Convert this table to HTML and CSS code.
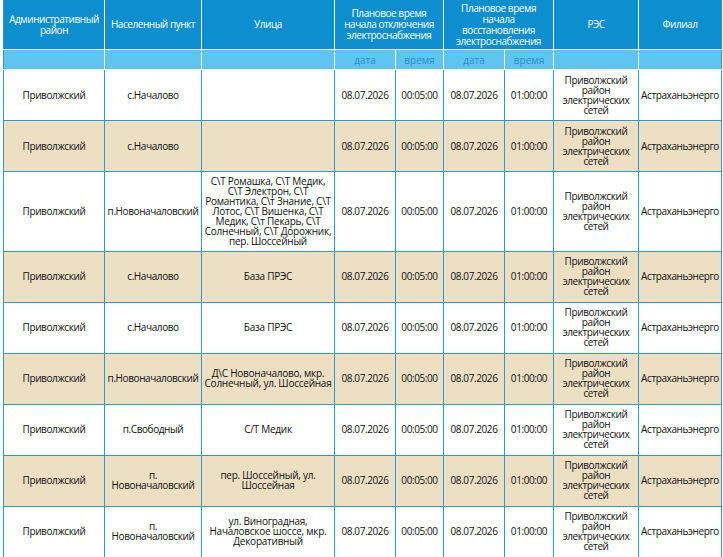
FILE: index.html
```html
<!DOCTYPE html>
<html lang="ru">
<head>
<meta charset="utf-8">
<link rel="stylesheet" href="styles.css">
</head>
<body>
<table class="outages">
  <colgroup>
    <col class="c-district"><col class="c-place"><col class="c-street">
    <col class="c-d1"><col class="c-t1"><col class="c-d2"><col class="c-t2">
    <col class="c-res"><col class="c-branch">
  </colgroup>
  <thead>
    <tr class="head-main">
      <th>Административный район</th>
      <th>Населенный пункт</th>
      <th>Улица</th>
      <th colspan="2">Плановое время начала отключения электроснабжения</th>
      <th colspan="2">Плановое время начала восстановления электроснабжения</th>
      <th>РЭС</th>
      <th>Филиал</th>
    </tr>
    <tr class="head-sub">
      <th></th><th></th><th></th>
      <th>дата</th><th>время</th><th>дата</th><th>время</th>
      <th></th><th></th>
    </tr>
  </thead>
  <tbody>
    <tr>
      <td>Приволжский</td><td>с.Началово</td><td class="street"></td>
      <td>08.07.2026</td><td>00:05:00</td><td>08.07.2026</td><td>01:00:00</td>
      <td>Приволжский район электрических сетей</td><td>Астраханьэнерго</td>
    </tr>
    <tr class="alt">
      <td>Приволжский</td><td>с.Началово</td><td class="street"></td>
      <td>08.07.2026</td><td>00:05:00</td><td>08.07.2026</td><td>01:00:00</td>
      <td>Приволжский район электрических сетей</td><td>Астраханьэнерго</td>
    </tr>
    <tr>
      <td>Приволжский</td><td>п.Новоначаловский</td><td class="street">С\Т Ромашка, С\Т Медик, С\Т Электрон, С\Т Романтика, С\т Знание, С\Т Лотос, С\Т Вишенка, С\Т Медик, С\т Пекарь, С\Т Солнечный, С\Т Дорожник, пер. Шоссейный</td>
      <td>08.07.2026</td><td>00:05:00</td><td>08.07.2026</td><td>01:00:00</td>
      <td>Приволжский район электрических сетей</td><td>Астраханьэнерго</td>
    </tr>
    <tr class="alt">
      <td>Приволжский</td><td>с.Началово</td><td class="street">База ПРЭС</td>
      <td>08.07.2026</td><td>00:05:00</td><td>08.07.2026</td><td>01:00:00</td>
      <td>Приволжский район электрических сетей</td><td>Астраханьэнерго</td>
    </tr>
    <tr>
      <td>Приволжский</td><td>с.Началово</td><td class="street">База ПРЭС</td>
      <td>08.07.2026</td><td>00:05:00</td><td>08.07.2026</td><td>01:00:00</td>
      <td>Приволжский район электрических сетей</td><td>Астраханьэнерго</td>
    </tr>
    <tr class="alt">
      <td>Приволжский</td><td>п.Новоначаловский</td><td class="street">Д\С Новоначалово, мкр. Солнечный, ул. Шоссейная</td>
      <td>08.07.2026</td><td>00:05:00</td><td>08.07.2026</td><td>01:00:00</td>
      <td>Приволжский район электрических сетей</td><td>Астраханьэнерго</td>
    </tr>
    <tr>
      <td>Приволжский</td><td>п.Свободный</td><td class="street">С/Т Медик</td>
      <td>08.07.2026</td><td>00:05:00</td><td>08.07.2026</td><td>01:00:00</td>
      <td>Приволжский район электрических сетей</td><td>Астраханьэнерго</td>
    </tr>
    <tr class="alt">
      <td>Приволжский</td><td>п. Новоначаловский</td><td class="street">пер. Шоссейный, ул. Шоссейная</td>
      <td>08.07.2026</td><td>00:05:00</td><td>08.07.2026</td><td>01:00:00</td>
      <td>Приволжский район электрических сетей</td><td>Астраханьэнерго</td>
    </tr>
    <tr>
      <td>Приволжский</td><td>п. Новоначаловский</td><td class="street">ул. Виноградная, Началовское шоссе, мкр. Декоративный</td>
      <td>08.07.2026</td><td>00:05:00</td><td>08.07.2026</td><td>01:00:00</td>
      <td>Приволжский район электрических сетей</td><td>Астраханьэнерго</td>
    </tr>
  </tbody>
</table>
</body>
</html>
```

FILE: styles.css
```css
html, body {
  margin: 0;
  padding: 0;
  background: #ffffff;
}
body {
  padding-left: 3px;
  font-family: "Open Sans", "Noto Sans", sans-serif;
}
.outages {
  border-collapse: collapse;
  table-layout: fixed;
  width: 718px;
  font-size: 10px;
  line-height: 10px;
  text-align: center;
}
.c-district { width: 101px; }
.c-place { width: 97px; }
.c-street { width: 133px; }
.c-d1 { width: 61px; }
.c-t1 { width: 48px; }
.c-d2 { width: 61px; }
.c-t2 { width: 49px; }
.c-res { width: 85px; }
.c-branch { width: 83px; }

.outages th {
  font-weight: normal;
  border: 1px solid #ffffff;
  padding: 0 3px;
  vertical-align: middle;
  letter-spacing: -0.45px;
}
.outages thead tr:first-child th { border-top: 0; }
.outages thead th:first-child { border-left: 1px solid #2a9ad0; }
.outages thead th:last-child { border-right: 1px solid #2a9ad0; }
.head-main th {
  background: #0c8ecf;
  color: #ffffff;
  height: 49px;
  line-height: 11px;
}
.head-sub th {
  background: #5fc4f0;
  color: #2a8fcb;
  height: 19px;
  letter-spacing: 0;
}
.outages td {
  border: 1px solid #2a9ad0;
  color: #111111;
  height: 41.5px;
  padding: 4px 2px 4.5px;
  vertical-align: middle;
  letter-spacing: -0.4px;
}
.outages td.street {
  letter-spacing: -0.25px;
}
.outages tr.alt td {
  background: #ecdfc4;
}
```
